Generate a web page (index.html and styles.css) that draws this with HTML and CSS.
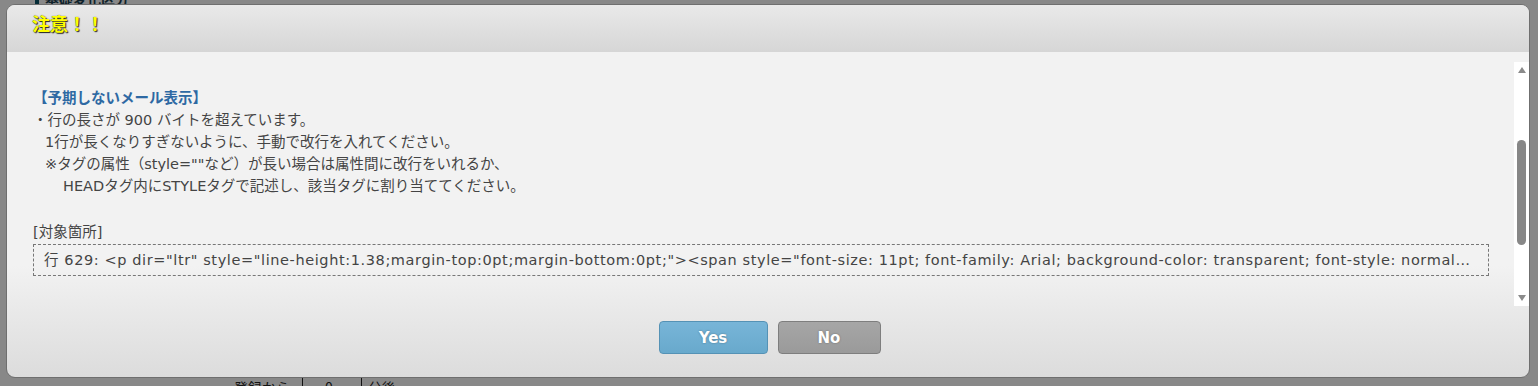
FILE: index.html
```html
<!DOCTYPE html>
<html lang="ja">
<head>
  <meta charset="UTF-8">
  <title>注意</title>
  <link rel="stylesheet" href="styles.css">
</head>
<body>
  <!-- page behind the overlay -->
  <div class="page">
    <div class="page-top"><span class="bar"></span>基礎変化区分</div>
    <div class="page-bottom">
      <span class="cell">登録から</span>
      <span class="cell num">0</span>
      <span class="cell">分後</span>
    </div>
  </div>

  <div class="overlay"></div>

  <!-- Dialog -->
  <div class="dialog">
    <div class="dialog-title">注意！！</div>
    <div class="dialog-body">
      <div class="scroll-area">
        <div class="message">
          <div class="heading">【予期しないメール表示】</div>
          <div>・行の長さが 900 バイトを超えています。</div>
          <div class="indent1">1行が長くなりすぎないように、手動で改行を入れてください。</div>
          <div class="indent1">※タグの属性（style=""など）が長い場合は属性間に改行をいれるか、</div>
          <div class="indent2">HEADタグ内にSTYLEタグで記述し、該当タグに割り当ててください。</div>
          <div class="label">[対象箇所]</div>
          <div class="target">行 629: &lt;p dir="ltr" style="line-height:1.38;margin-top:0pt;margin-bottom:0pt;"&gt;&lt;span style="font-size: 11pt; font-family: Arial; background-color: transparent; font-style: normal; font-variant: normal; font-weight: 400; text-decoration: none;"&gt;</div>
        </div>
        <div class="scrollbar">
          <span class="arrow up"></span>
          <span class="track"><span class="thumb"></span></span>
          <span class="arrow down"></span>
        </div>
      </div>
    </div>
    <div class="dialog-footer">
      <button class="btn yes">Yes</button>
      <button class="btn no">No</button>
    </div>
  </div>
</body>
</html>
```

FILE: styles.css
```css
body {
  margin: 0;
  padding: 0;
  width: 1538px;
  height: 386px;
  overflow: hidden;
  background-color: #f0f0f0;
  font-family: "Noto Sans CJK JP", "Noto Sans", sans-serif;
  position: relative;
}

/* page behind */
.page {
  display: flex;
  flex-direction: column;
  justify-content: space-between;
  height: 386px;
  color: #1c3d4c;
  font-size: 14px;
}

.page-top {
  display: flex;
  align-items: center;
  gap: 6px;
  padding-left: 35px;
  margin-top: -12px;
  font-weight: 700;
}

.page-top .bar {
  width: 4px;
  height: 18px;
  background-color: #0b4f63;
}

.page-bottom {
  display: flex;
  padding-left: 234px;
  margin-bottom: -11px;
  color: #222;
}

.page-bottom .cell {
  padding: 0 12px 0 0;
  border-right: 1px solid #222;
  margin-right: 6px;
}

.page-bottom .num {
  width: 40px;
  text-align: center;
}

.page-bottom .cell:last-child {
  border-right: none;
}

.overlay {
  position: absolute;
  inset: 0;
  background-color: rgba(0, 0, 0, 0.43);
}

/* Dialog */
.dialog {
  position: absolute;
  top: 4px;
  left: 6px;
  width: 1522px;
  height: 372px;
  border: 1px solid #6f6f6f;
  border-radius: 9px;
  overflow: hidden;
  display: flex;
  flex-direction: column;
  background: linear-gradient(#f2f2f2 0%, #f2f2f2 70%, #dcdcdc 100%);
}

.dialog-title {
  height: 47px;
  flex-shrink: 0;
  box-sizing: border-box;
  padding: 6px 0 0 25px;
  background: linear-gradient(#e9e9e9, #d6d6d6);
  color: #ffff00;
  font-size: 18px;
  line-height: 24px;
  font-weight: 700;
  text-shadow: 1px 1px 1px #222, 0 0 1px #444;
}

.dialog-body {
  padding-top: 10px;
}

.scroll-area {
  display: flex;
  height: 244px;
}

.message {
  flex-grow: 1;
  padding: 25px 25px 0 26px;
  font-family: "DejaVu Sans", "Noto Sans CJK JP", sans-serif;
  font-size: 14.5px;
  line-height: 22px;
  color: #444;
  overflow: hidden;
}

.message .heading {
  color: #2e69a3;
  font-weight: 700;
}

.message .indent1 {
  padding-left: 12px;
}

.message .indent2 {
  padding-left: 30px;
}

.message .label {
  margin-top: 25px;
  line-height: 20px;
}

.message .target {
  margin-top: 2px;
  height: 30px;
  line-height: 30px;
  border: 1px dashed #777;
  padding: 0 14px 0 10px;
  letter-spacing: 0.6px;
  white-space: nowrap;
  overflow: hidden;
  text-overflow: ellipsis;
}

/* scrollbar */
.scrollbar {
  width: 15px;
  flex-shrink: 0;
  background-color: #ffffff;
  display: flex;
  flex-direction: column;
  align-items: center;
}

.scrollbar .arrow {
  width: 0;
  height: 0;
  border-left: 4px solid transparent;
  border-right: 4px solid transparent;
}

.scrollbar .up {
  margin-top: 5px;
  border-bottom: 6px solid #8a8a8a;
}

.scrollbar .down {
  margin-bottom: 5px;
  border-top: 6px solid #8a8a8a;
}

.scrollbar .track {
  flex-grow: 1;
  display: flex;
  flex-direction: column;
  padding-top: 67px;
}

.scrollbar .thumb {
  width: 9px;
  height: 105px;
  border-radius: 5px;
  background-color: #878787;
}

/* footer */
.dialog-footer {
  flex-grow: 1;
  display: flex;
  justify-content: center;
  align-items: flex-start;
  gap: 10px;
  padding: 15px 0 0 3px;
}

.btn {
  height: 33px;
  border-radius: 4px;
  font-family: "DejaVu Sans", "Noto Sans", sans-serif;
  font-size: 15px;
  font-weight: 700;
  color: #ffffff;
  text-shadow: 0 0 2px rgba(0, 0, 0, 0.35);
  cursor: pointer;
}

.btn.yes {
  width: 109px;
  background: linear-gradient(#78b5d8, #68a9cc);
  border: 1px solid #5592b5;
}

.btn.no {
  width: 103px;
  background: linear-gradient(#a6a6a6, #9a9a9a);
  border: 1px solid #7e7e7e;
}
```
